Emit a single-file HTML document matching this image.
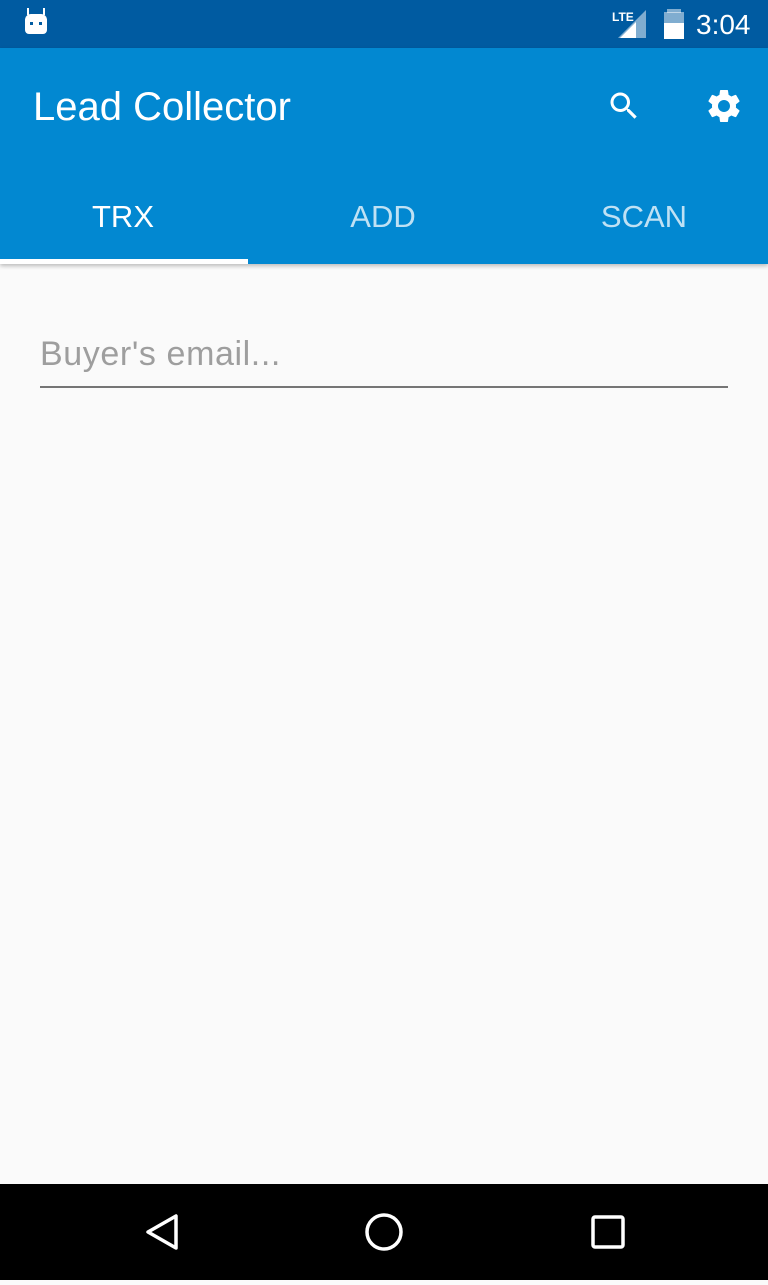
<!DOCTYPE html><html><head><style>
body{margin:0;width:768px;height:1280px;background:#fafafa;font-family:"Liberation Sans",sans-serif;position:relative;overflow:hidden}
.sb{position:absolute;top:0;left:0;width:768px;height:48px;background:#005ba1}
.ab{position:absolute;top:48px;left:0;width:768px;height:216px;background:#0288d1;box-shadow:0 2px 4px rgba(0,0,0,.25)}
.t{position:absolute;color:#fff}
.tab{position:absolute;top:199px;font-size:31px;width:256px;text-align:center;color:rgba(255,255,255,.75)}
.nav{position:absolute;bottom:0;left:0;width:768px;height:96px;background:#000}
</style></head><body>
<div class="sb">
<div style="position:absolute;left:25px;top:14px;width:22px;height:20px;background:#fff;border-radius:6px 6px 4px 4px"></div>
<div style="position:absolute;left:27px;top:8px;width:2px;height:7px;background:#fff"></div>
<div style="position:absolute;left:43px;top:8px;width:2px;height:7px;background:#fff"></div>
<div style="position:absolute;left:30px;top:22px;width:3px;height:3px;background:#005ba1"></div>
<div style="position:absolute;left:39px;top:22px;width:3px;height:3px;background:#005ba1"></div>
<div class="t" style="left:612px;top:10px;font-size:12px;font-weight:bold">LTE</div>
<svg style="position:absolute;left:618px;top:10px" width="30" height="30"><polygon points="28,0 28,28 0,28" fill="#fff" opacity=".5"/><polygon points="18,12 18,28 2,28" fill="#fff"/></svg>
<svg style="position:absolute;left:664px;top:9px" width="20" height="30"><rect x="3" y="0" width="14" height="4" fill="#fff" opacity=".5"/><rect x="0" y="3" width="20" height="27" fill="#fff" opacity=".5"/><rect x="0" y="14" width="20" height="16" fill="#fff"/></svg>
<div class="t" style="left:696px;top:9px;font-size:28px">3:04</div>
</div>
<div class="ab">
<div class="t" style="left:33px;top:37px;font-size:40px">Lead Collector</div>
<svg style="position:absolute;left:606px;top:40px" width="36" height="36" viewBox="0 0 24 24"><path fill="#fff" d="M15.5 14h-.79l-.28-.27A6.47 6.47 0 0 0 16 9.5 6.5 6.5 0 1 0 9.5 16c1.61 0 3.09-.59 4.23-1.57l.27.28v.79l5 4.99L20.49 19l-4.99-5zm-6 0C7.01 14 5 11.99 5 9.5S7.01 5 9.5 5 14 7.01 14 9.5 11.99 14 9.5 14z"/></svg>
<svg style="position:absolute;left:704px;top:38px" width="40" height="40" viewBox="0 0 24 24"><path fill="#fff" d="M19.14 12.94c.04-.3.06-.61.06-.94 0-.32-.02-.64-.07-.94l2.03-1.58a.49.49 0 0 0 .12-.61l-1.92-3.32a.488.488 0 0 0-.59-.22l-2.39.96c-.5-.38-1.03-.7-1.62-.94l-.36-2.54a.484.484 0 0 0-.48-.41h-3.84c-.24 0-.43.17-.47.41l-.36 2.54c-.59.24-1.13.57-1.62.94l-2.39-.96c-.22-.08-.47 0-.59.22L2.74 8.87c-.12.21-.08.47.12.61l2.03 1.58c-.05.3-.09.63-.09.94s.02.64.07.94l-2.03 1.58a.49.49 0 0 0-.12.61l1.92 3.32c.12.22.37.29.59.22l2.39-.96c.5.38 1.03.7 1.62.94l.36 2.54c.05.24.24.41.48.41h3.84c.24 0 .44-.17.47-.41l.36-2.54c.59-.24 1.13-.56 1.62-.94l2.39.96c.22.08.47 0 .59-.22l1.92-3.32c.12-.22.07-.47-.12-.61l-2.01-1.58zM12 15.6c-1.98 0-3.6-1.62-3.6-3.6s1.62-3.6 3.6-3.6 3.6 1.62 3.6 3.6-1.62 3.6-3.6 3.6z"/></svg>
</div>
<div class="tab" style="left:-5px;color:#fff">TRX</div>
<div class="tab" style="left:255px">ADD</div>
<div class="tab" style="left:516px">SCAN</div>
<div style="position:absolute;left:0;top:259px;width:248px;height:5px;background:#fff"></div>
<div style="position:absolute;left:40px;top:335px;font-size:34px;color:#9e9e9e;letter-spacing:0.6px">Buyer's email...</div>
<div style="position:absolute;left:40px;top:386px;width:688px;height:2px;background:#757575"></div>
<div class="nav">
<svg width="768" height="96"><polygon points="176,32 176,64 148,48" fill="none" stroke="#fff" stroke-width="3.5" stroke-linejoin="round"/><circle cx="384" cy="48" r="17" fill="none" stroke="#fff" stroke-width="3.5"/><rect x="593" y="33" width="30" height="30" rx="2" fill="none" stroke="#fff" stroke-width="3.5"/></svg>
</div>
</body></html>
